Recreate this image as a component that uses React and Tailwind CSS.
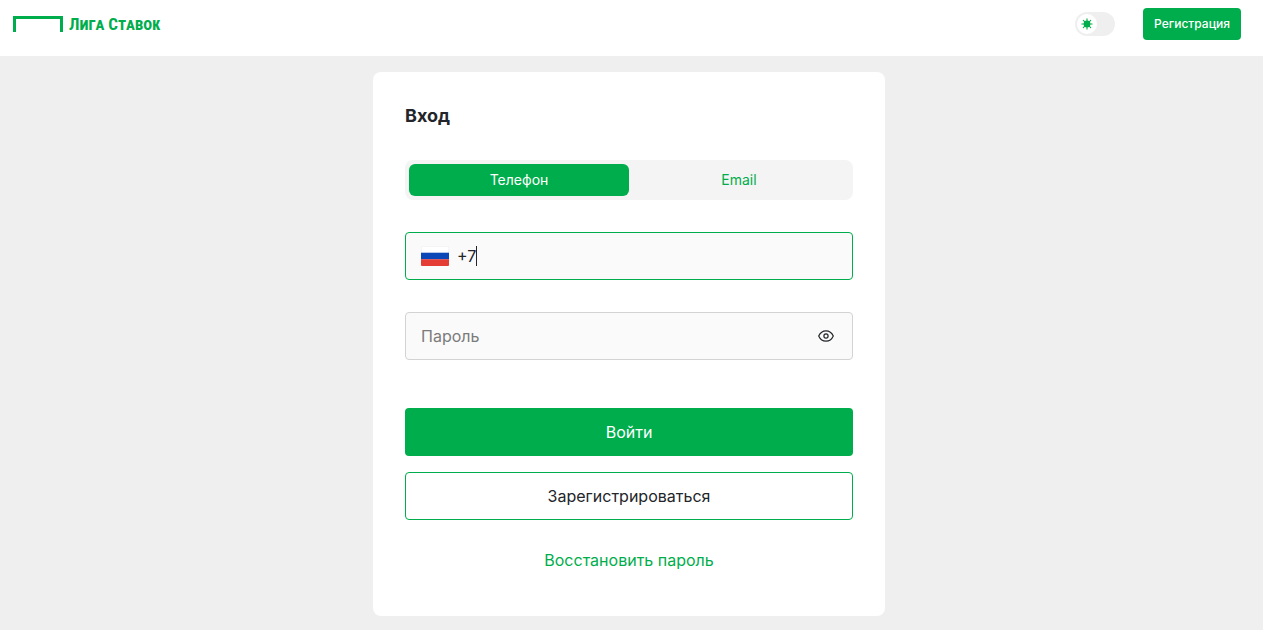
import { useState } from 'react';
import clsx from 'clsx';

const TABS = [
  { id: 'phone', label: 'Телефон' },
  { id: 'email', label: 'Email' },
];

function Logo() {
  return (
    <a href="#" className="flex items-center gap-1.5 text-[#00ad4c]">
      <svg width="50" height="16" viewBox="0 0 50 16" fill="currentColor" aria-hidden="true">
        <path d="M0 0h50v16h-3V3H3v13H0z" />
      </svg>
      <span className="font-['Roboto_Condensed','Liberation_Sans_Narrow','Liberation_Sans',sans-serif] text-[17px] leading-4 font-bold whitespace-nowrap [font-variant-caps:small-caps]">
        Лига Ставок
      </span>
    </a>
  );
}

function SunIcon() {
  return (
    <svg width="12" height="12" viewBox="0 0 12 12" aria-hidden="true">
      <circle cx="6" cy="6" r="3.4" fill="#00ad4c" />
      <path
        d="M6 .9v10.2M.9 6h10.2M2.3 2.3l7.4 7.4M9.7 2.3 2.3 9.7"
        stroke="#00ad4c"
        strokeWidth="1.1"
        strokeLinecap="round"
      />
    </svg>
  );
}

function EyeIcon() {
  return (
    <svg width="16" height="16" viewBox="0 0 16 16" fill="none" stroke="#222529" strokeWidth="1.2" aria-hidden="true">
      <path d="M.7 8C2.2 4.7 4.8 2.8 8 2.8S13.8 4.7 15.3 8c-1.5 3.3-4.1 5.2-7.3 5.2S2.2 11.3.7 8z" />
      <circle cx="8" cy="8" r="2.1" />
    </svg>
  );
}

function RussianFlag() {
  return (
    <svg width="28" height="20" viewBox="0 0 28 20" aria-hidden="true">
      <path fill="#fff" stroke="#f5f5f5" d="M.5.5h27V8H.5z" />
      <path fill="#0c47b7" d="M0 6.7h28v6.6H0z" />
      <path fill="#e53b35" d="M0 13.3h28V19a1 1 0 0 1-1 1H1a1 1 0 0 1-1-1z" />
    </svg>
  );
}

export default function App() {
  const [tab, setTab] = useState('phone');
  const [phone, setPhone] = useState('+7');
  const [showPassword, setShowPassword] = useState(false);

  return (
    <div className="flex min-h-screen flex-col bg-[#efefef] font-['Inter',sans-serif] text-[#222529]">
      <header className="flex h-14 items-start justify-between bg-white pt-2 pr-[22px] pl-[13px]">
        <div className="flex h-8 items-center">
          <Logo />
        </div>
        <div className="flex items-center gap-7">
          <label className="flex h-6 w-10 cursor-pointer items-center rounded-full bg-[#efefef] p-0.5">
            <input type="checkbox" className="peer sr-only" aria-label="Тёмная тема" />
            <span className="flex size-5 items-center justify-center rounded-full bg-white peer-checked:ml-4">
              <SunIcon />
            </span>
          </label>
          <button className="h-8 rounded bg-[#00ad4c] px-[11px] text-xs font-medium text-white">
            Регистрация
          </button>
        </div>
      </header>

      <main className="flex justify-center pt-4 pr-[5px] pb-3.5">
        <form className="w-full max-w-lg rounded-lg bg-white p-8" onSubmit={(e) => e.preventDefault()}>
          <h1 className="text-lg leading-6 font-bold">Вход</h1>

          <div className="mt-8 flex rounded-lg bg-[#f4f4f4] p-1">
            {TABS.map(({ id, label }) => (
              <button
                key={id}
                type="button"
                onClick={() => setTab(id)}
                className={clsx(
                  'h-8 flex-1 rounded-md text-sm',
                  tab === id ? 'bg-[#00ad4c] text-white' : 'text-[#00ad4c]'
                )}
              >
                {label}
              </button>
            ))}
          </div>

          <label className="mt-8 flex h-12 items-center rounded border border-[#00ad4c] bg-[#fafafa] px-[15px]">
            <RussianFlag />
            <input
              type="tel"
              aria-label="Телефон"
              value={phone}
              onChange={(e) => setPhone(e.target.value)}
              className="ml-2 h-6 [field-sizing:content] bg-transparent text-base caret-transparent outline-none"
            />
            {/* text cursor */}
            <span className="h-5 w-px bg-[#222529]" />
          </label>

          <div className="mt-8 flex h-12 items-center rounded border border-[#d3d3d3] bg-[#fafafa] pr-[18px] pl-[15px]">
            <input
              type={showPassword ? 'text' : 'password'}
              aria-label="Пароль"
              placeholder="Пароль"
              className="h-6 min-w-0 flex-1 bg-transparent text-base outline-none placeholder:text-[#7b7b7b]"
            />
            <button type="button" aria-label="Показать пароль" onClick={() => setShowPassword(!showPassword)}>
              <EyeIcon />
            </button>
          </div>

          <button type="submit" className="mt-12 h-12 w-full rounded bg-[#00ad4c] text-base text-white">
            Войти
          </button>
          <button type="button" className="mt-4 h-12 w-full rounded border border-[#00ad4c] bg-white text-base">
            Зарегистрироваться
          </button>
          <a href="#" className="mt-4 flex h-12 items-center justify-center text-base text-[#00ad4c]">
            Восстановить пароль
          </a>
        </form>
      </main>
    </div>
  );
}
